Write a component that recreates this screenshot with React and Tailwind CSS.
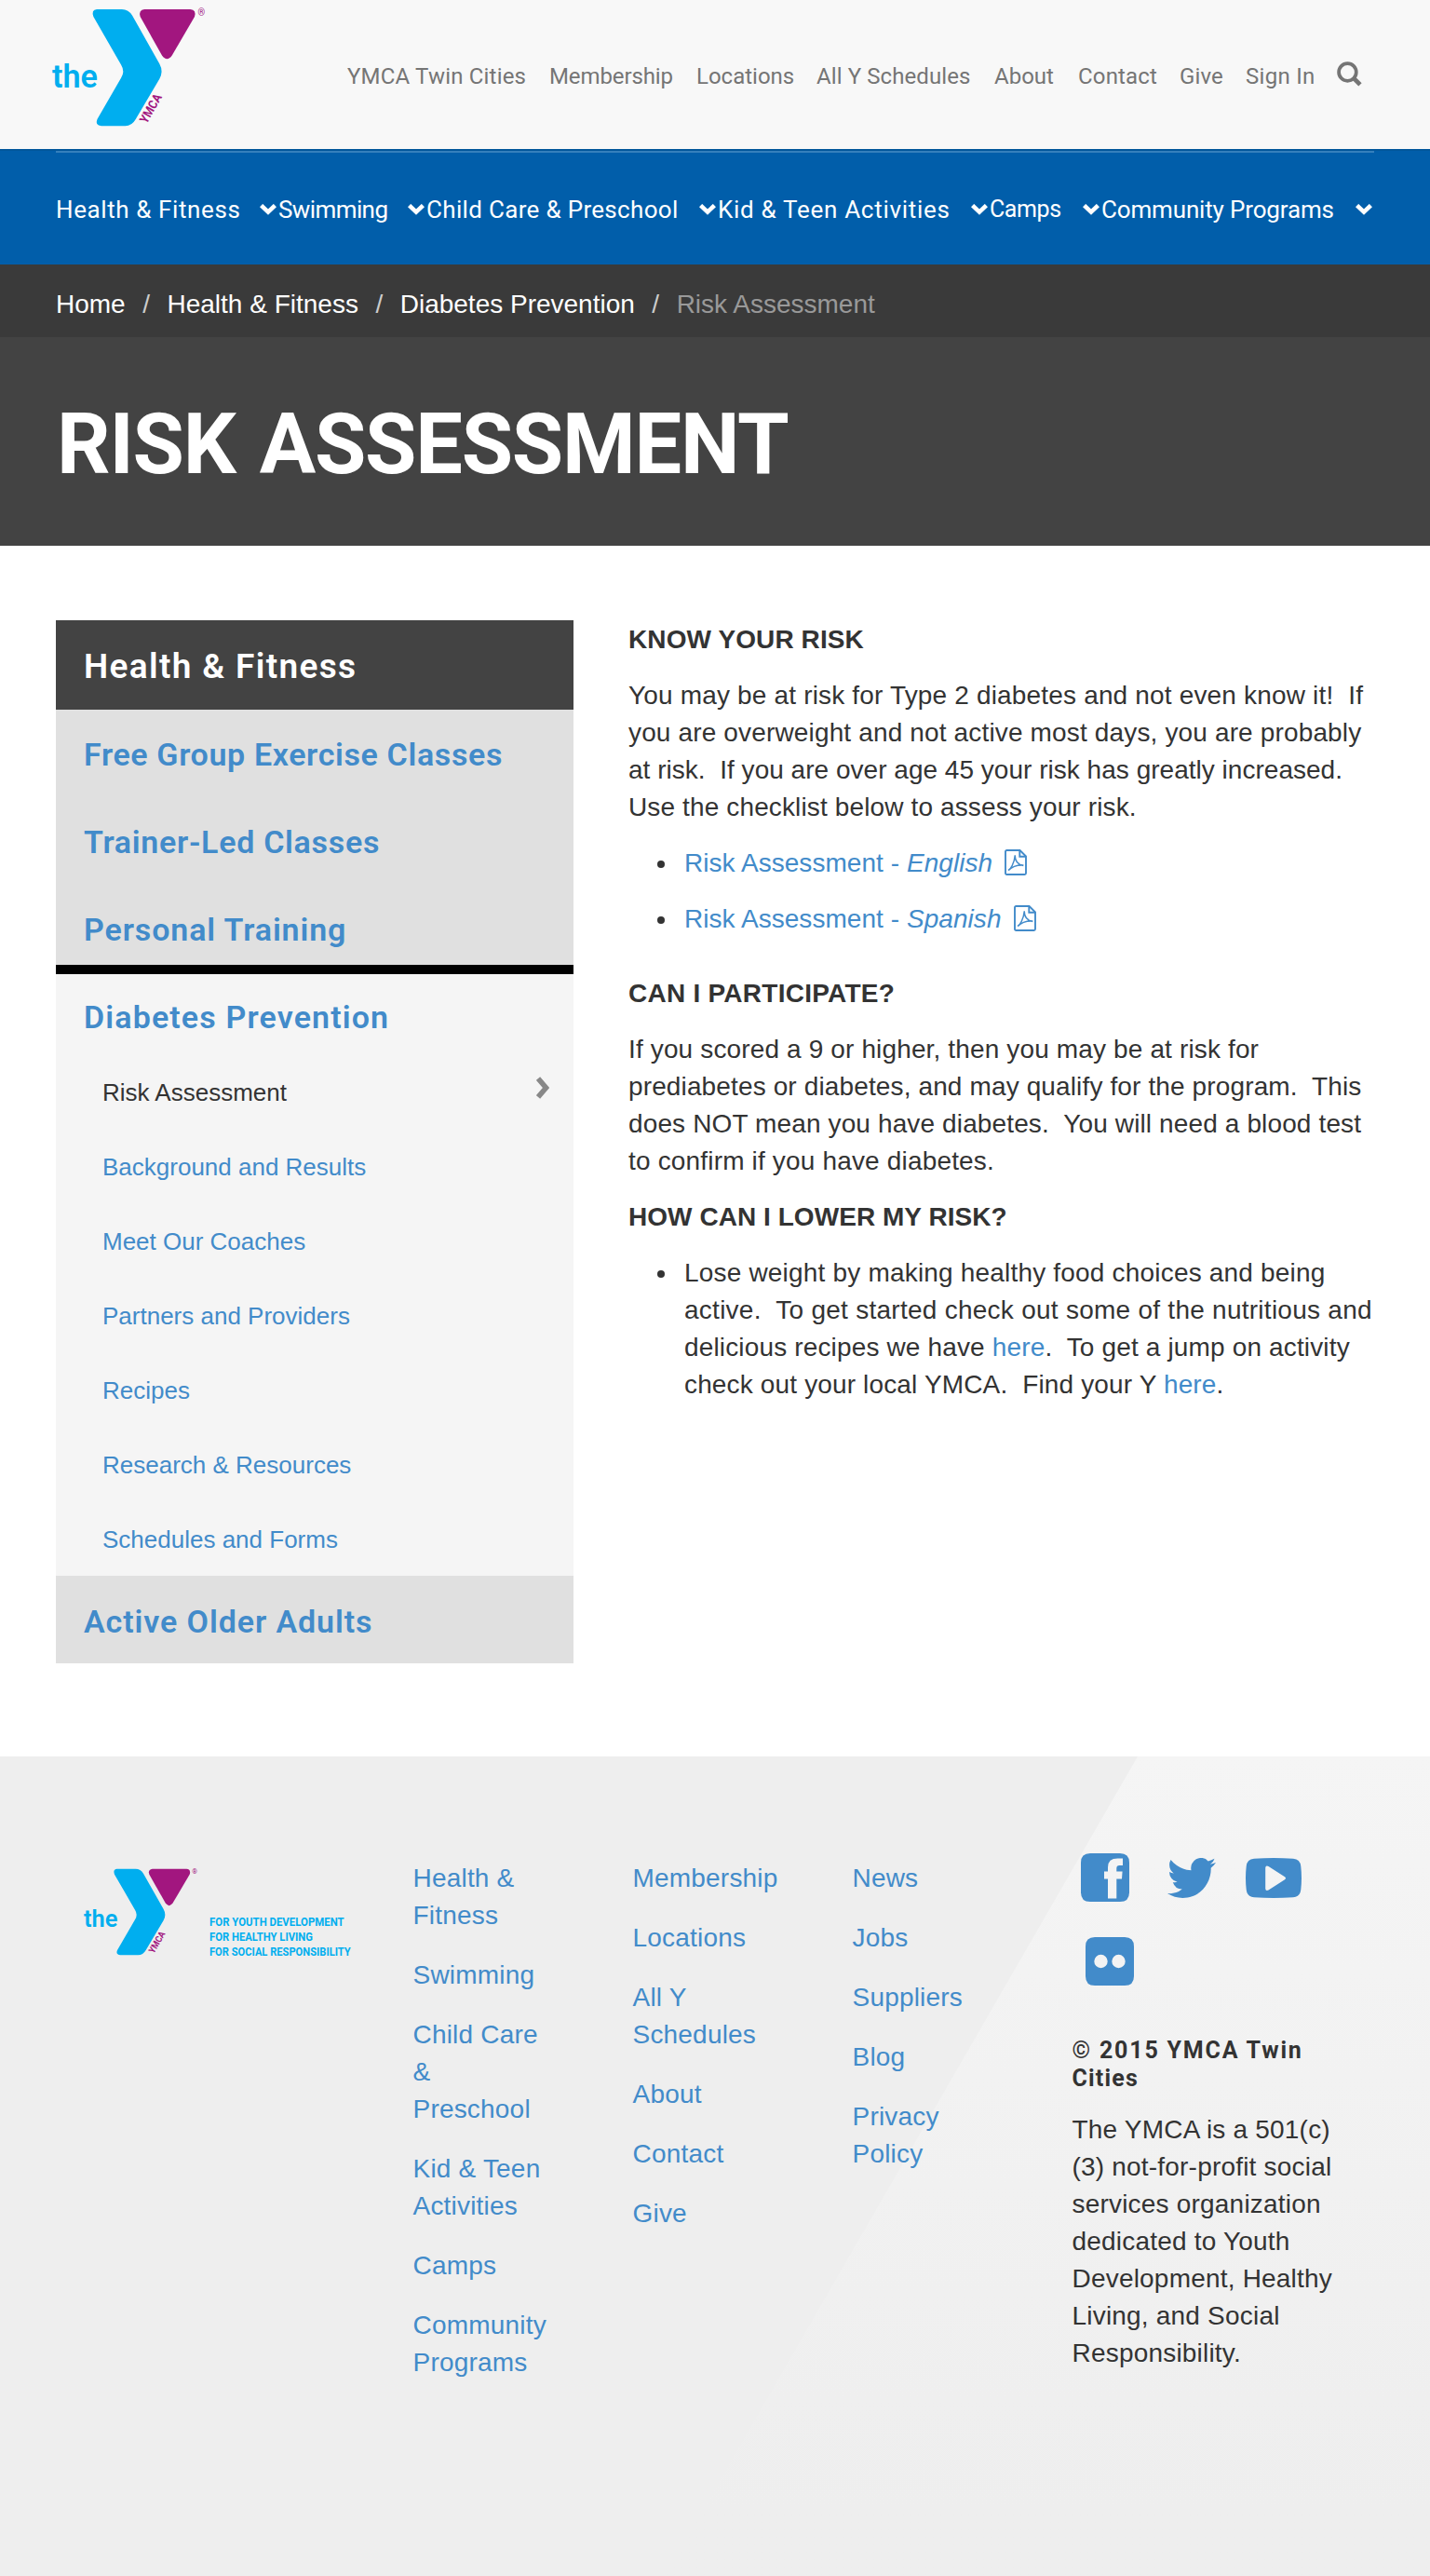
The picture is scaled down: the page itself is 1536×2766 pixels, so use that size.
import React from "react";

const SANS = "font-['Liberation_Sans',Arial,sans-serif]";
const HEAD = "font-[Roboto,sans-serif]";

function YMark({ className, tagline }) {
  return (
    <svg viewBox={tagline ? "150 138 870 284" : "150 138 370 284"} preserveAspectRatio="none" className={`overflow-visible ${className}`} fontFamily="Roboto, sans-serif" fontWeight="700">
      <text x="150" y="326" fontSize="78" fontWeight="600" textLength="109" lengthAdjust="spacingAndGlyphs" fill="#00aeef">the</text>
      <path d="M257 140H317Q333 140 342 155L407 270Q417 288 407 306L350 402Q341 418 325 418H268Q252 417 258 402L315 304Q325 288 315 272L249 158Q243 141 257 140Z" fill="#00aeef" />
      <path d="M371 140H481Q496 141 491 158L437 250Q425 267 413 250L361 158Q356 142 371 140Z" fill="#a2167f" />
      <text transform="translate(376 414) rotate(-60)" fontSize="30" textLength="75" lengthAdjust="spacingAndGlyphs" fill="#a2167f">YMCA</text>
      <text x="499" y="156" fontSize="23" fontWeight="400" textLength="17" lengthAdjust="spacingAndGlyphs" fill="#a2167f">®</text>
      {tagline && (
        <g fill="#00aeef" fontSize="38">
          <text x="555" y="323" textLength="434" lengthAdjust="spacingAndGlyphs">FOR YOUTH DEVELOPMENT</text>
          <text x="555" y="371" textLength="333" lengthAdjust="spacingAndGlyphs">FOR HEALTHY LIVING</text>
          <text x="555" y="419" textLength="455" lengthAdjust="spacingAndGlyphs">FOR SOCIAL RESPONSIBILITY</text>
        </g>
      )}
    </svg>
  );
}

const UTILITY = [
  ["YMCA Twin Cities", "w-[217px] tracking-[0.19px]"],
  ["Membership", "w-[158px] tracking-[-0.1px]"],
  ["Locations", "w-[129px]"],
  ["All Y Schedules", "w-[191px] tracking-[0.09px]"],
  ["About", "w-[90px]"],
  ["Contact", "w-[109px] tracking-[0.16px]"],
  ["Give", "w-[71px] tracking-[0.11px]"],
  ["Sign In", "w-[98px] tracking-[0.28px]"],
];

const MAIN = [
  ["Health & Fitness", "w-[239px] tracking-[0.6px]"],
  ["Swimming", "w-[159px] tracking-[-0.6px]"],
  ["Child Care & Preschool", "w-[313px] tracking-[0.32px]"],
  ["Kid & Teen Activities", "w-[292px] tracking-[0.7px]"],
  ["Camps", "w-[120px] text-[25px] tracking-[-0.4px]"],
  ["Community Programs", "w-[293px] tracking-[-0.16px]"],
];

function Header() {
  return (
    <header>
      <div className="flex h-[160px] items-start bg-[#f8f8f8] pl-14">
        <YMark className="mt-[9px] h-[128px] w-[166px] shrink-0" />
        <nav className={`${HEAD} ml-[151px] mt-[70px] flex text-2xl leading-6 whitespace-nowrap text-[#757575]`}>
          {UTILITY.map(([label, cls]) => (
            <a key={label} className={`shrink-0 ${cls}`}>{label}</a>
          ))}
          <svg viewBox="0 0 26 26" className="-mt-1 size-[27px] shrink-0" fill="none" stroke="#757575">
            <circle cx="11" cy="11" r="9" strokeWidth="3.6" />
            <path d="M17.5 17.5L24 24" strokeWidth="4.6" />
          </svg>
        </nav>
      </div>
      <div className="h-[124px] border-t-2 border-[#01569b] bg-[#015eaa] px-[60px]">
        <div className="h-0.5 bg-[#3580bc]" />
        <nav className={`${HEAD} flex pt-[45px] text-[26px] leading-8 whitespace-nowrap text-white`}>
          {MAIN.map(([label, cls]) => (
            <a key={label} className={`flex shrink-0 items-center justify-between ${cls}`}>
              {label}
              <svg viewBox="0 0 18 12" className="mr-0.5 h-3 w-[18px]" fill="none" stroke="currentColor" strokeWidth="4.6">
                <path d="M1.6 1.6L9 8.6L16.4 1.6" />
              </svg>
            </a>
          ))}
        </nav>
      </div>
    </header>
  );
}

function Breadcrumb() {
  const items = ["Home", "Health & Fitness", "Diabetes Prevention"];
  return (
    <div className={`${SANS} flex h-[78px] bg-[#3a3a3a] pl-[60px] pt-[5px] text-[28px] leading-[76px] whitespace-pre text-white`}>
      {items.map((t) => (
        <span key={t}>{t}<span className="px-[18.5px] text-[#ccc]">/</span></span>
      ))}
      <span className="text-[#999]">Risk Assessment</span>
    </div>
  );
}

const SIDE_SUB = ["Background and Results", "Meet Our Coaches", "Partners and Providers", "Recipes", "Research & Resources", "Schedules and Forms"];

function Sidebar() {
  const base = `${HEAD} flex items-center pl-[30px] text-[34px] font-semibold text-[#428bca]`;
  const item = `${base} h-[94px] pt-[3px]`;
  return (
    <aside className="w-[556px] shrink-0 bg-[#e0e0e0]">
      <div className={`${HEAD} flex h-24 items-center bg-[#434343] pl-[30px] pt-[3px] text-[37px] font-semibold tracking-[1.33px] text-white`}>Health &amp; Fitness</div>
      <div className={`${item} tracking-[0.63px]`}>Free Group Exercise Classes</div>
      <div className={`${item} tracking-[0.7px]`}>Trainer-Led Classes</div>
      <div className={`${item} -mb-2 tracking-[0.89px]`}>Personal Training</div>
      <div className="border-t-10 border-black bg-[#f5f5f5]">
        <div className={`${base} h-[86px] pt-[7px] tracking-[1.13px]`}>Diabetes Prevention</div>
        <div className={`${SANS} flex h-20 items-center justify-between pl-[50px] pr-[26px] pt-0.5 text-[26px] leading-[78px] text-[#333]`}>
          Risk Assessment
          <svg viewBox="0 0 14 24" className="-mt-2.5 h-6 w-3.5" fill="none" stroke="#888" strokeWidth="5.6">
            <path d="M2 2L10.500 12L2 22" />
          </svg>
        </div>
        {SIDE_SUB.map((t) => (
          <div key={t} className={`${SANS} h-20 pl-[50px] pt-px text-[26px] leading-[80px] text-[#428bca]`}>{t}</div>
        ))}
      </div>
      <div className={`${base} h-[94px] pt-[5px] tracking-[0.91px]`}>Active Older Adults</div>
    </aside>
  );
}

function PdfIcon() {
  return (
    <svg viewBox="0 0 24 28" className="ml-[13px] inline-block h-7 w-6 align-[-4px]" fill="none" stroke="#428bca" strokeWidth="1.9">
      <path d="M2.500 1H16.500L23 7.500V25.500Q23 27 21.500 27H2.500Q1 27 1 25.500V2.500Q1 1 2.500 1Z" />
      <path d="M16.300 1V7.700H23" />
      <path d="M4 22.400C6.500 21.500 10.500 15 11.300 6.300M11.200 6.300C11.200 12 14 16.500 20.300 17.600M4.300 22.400C8 18.600 14 16.600 20.400 17" strokeWidth="1.5" />
    </svg>
  );
}

function Bullet({ children, className = "" }) {
  return (
    <li className={`flex ${className}`}>
      <span className="ml-[31px] mt-[17px] mr-[21px] size-2 shrink-0 rounded-full bg-[#333]" />
      <div>{children}</div>
    </li>
  );
}

function Link({ children }) {
  return <a className="text-[#428bca]">{children}</a>;
}

function Content() {
  return (
    <main className={`${SANS} ml-[59px] pt-px text-[28px] leading-10 whitespace-pre text-[#333]`}>
      <p className="font-bold tracking-[0.1px]">KNOW YOUR RISK</p>
      <div className="mt-5">
        <div className="tracking-[0.17px]">{"You may be at risk for Type 2 diabetes and not even know it!  If"}</div>
        <div className="tracking-[0.15px]">you are overweight and not active most days, you are probably</div>
        <div className="tracking-[0.02px]">{"at risk.  If you are over age 45 your risk has greatly increased."}</div>
        <div className="tracking-[0.13px]">Use the checklist below to assess your risk.</div>
      </div>
      <ul className="mt-5 tracking-[0.05px]">
        <Bullet><Link>Risk Assessment - <i>English</i><PdfIcon /></Link></Bullet>
        <Bullet className="mt-5"><Link>Risk Assessment - <i>Spanish</i><PdfIcon /></Link></Bullet>
      </ul>
      <p className="mt-10 font-bold tracking-[0.25px]">CAN I PARTICIPATE?</p>
      <div className="mt-5">
        <div className="tracking-[0.14px]">If you scored a 9 or higher, then you may be at risk for</div>
        <div className="tracking-[0.13px]">{"prediabetes or diabetes, and may qualify for the program.  This"}</div>
        <div className="tracking-[0.13px]">{"does NOT mean you have diabetes.  You will need a blood test"}</div>
        <div className="tracking-[0.17px]">to confirm if you have diabetes.</div>
      </div>
      <p className="mt-5 font-bold tracking-[0.05px]">HOW CAN I LOWER MY RISK?</p>
      <ul className="mt-5">
        <Bullet>
          <div className="tracking-[0.19px]">Lose weight by making healthy food choices and being</div>
          <div className="tracking-[0.26px]">{"active.  To get started check out some of the nutritious and"}</div>
          <div className="tracking-[0.15px]">delicious recipes we have <Link>here</Link>{".  To get a jump on activity"}</div>
          <div className="tracking-[0.15px]">{"check out your local YMCA.  Find your Y "}<Link>here</Link>.</div>
        </Bullet>
      </ul>
    </main>
  );
}

const COLUMNS = [
  ["Health & Fitness", "Swimming", "Child Care & Preschool", "Kid & Teen Activities", "Camps", "Community Programs"],
  ["Membership", "Locations", "All Y Schedules", "About", "Contact", "Give"],
  ["News", "Jobs", "Suppliers", "Blog", "Privacy Policy"],
];

function Social() {
  return (
    <div className="flex h-[200px] flex-wrap content-start items-center pl-[9px] text-[#428bca]">
      <svg viewBox="0 0 52 52" className="mt-0.5 mr-[41px] h-[52px] w-[52px]" fill="currentColor">
        <path fillRule="evenodd" d="M10 0H42Q52 0 52 10V42Q52 52 42 52H10Q0 52 0 42V10Q0 0 10 0ZM29 48.500H38.300V27.500H44L44.600 19.500H38.300V16Q38.300 13 41.500 13H45V5.600H39.500Q29 5.600 29 15V19.500H25V27.500H29Z" />
      </svg>
      <svg viewBox="0 0 24 19.5" preserveAspectRatio="none" className="mt-0.5 mr-8 h-[43px] w-[52px]" fill="currentColor">
        <path d="M23.953 2.31c-.885.389-1.83.654-2.825.775 1.014-.611 1.794-1.574 2.163-2.723-.951.555-2.005.959-3.127 1.184a4.92 4.92 0 00-8.384 4.482C7.69 5.835 4.067 3.867 1.64.892a4.822 4.822 0 00-.666 2.475c0 1.71.87 3.213 2.188 4.096a4.904 4.904 0 01-2.228-.616v.06a4.923 4.923 0 003.946 4.827 4.996 4.996 0 01-2.212.085 4.936 4.936 0 004.604 3.417 9.867 9.867 0 01-6.102 2.105c-.39 0-.779-.023-1.17-.067a13.995 13.995 0 007.557 2.209c9.053 0 13.998-7.496 13.998-13.985 0-.21 0-.42-.015-.63A9.935 9.935 0 0024 2.309z" />
      </svg>
      <svg viewBox="0 0 60 43" className="mt-0.5 h-[43px] w-[60px]" fill="currentColor">
        <path fillRule="evenodd" d="M9 .8Q30-.8 51 .8Q58.500 1.300 59.300 9Q60.700 21.500 59.300 34Q58.500 41.700 51 42.200Q30 43.800 9 42.200Q1.500 41.700.7 34Q-.7 21.500.7 9Q1.500 1.300 9 .8ZM21.200 10.500V33Q21.500 36 24.500 34.600L42 23.200Q44 21.700 42 20.200L24.500 8.900Q21.500 7.600 21.200 10.500Z" />
      </svg>
      <div className="w-full" />
      <svg viewBox="0 0 52 52" className="mt-[38px] ml-[5px] size-[52px]" fill="currentColor">
        <path fillRule="evenodd" d="M10 0H42Q52 0 52 10V42Q52 52 42 52H10Q0 52 0 42V10Q0 0 10 0ZM9.300 26A7.200 7.200 0 1 0 23.700 26A7.200 7.200 0 1 0 9.300 26ZM28.300 26A7.200 7.200 0 1 0 42.700 26A7.200 7.200 0 1 0 28.300 26Z" />
      </svg>
    </div>
  );
}

function Footer() {
  return (
    <footer className={`${SANS} relative h-[880px] bg-[#eee] text-[28px] leading-10`}>
      <div className="absolute inset-0 bg-linear-to-b from-[#f5f5f5] to-[#eee] to-[92%] [clip-path:polygon(1222px_0,100%_0,100%_100%,714px_100%)]" />
      <div className="relative flex">
        <div className="w-[443.500px] shrink-0 pl-[90px] pt-[120px]">
          <YMark tagline className="h-[94.660px] w-[290px]" />
        </div>
        {COLUMNS.map((col, i) => (
          <ul key={i} className="mr-[90px] flex w-[146px] shrink-0 flex-col gap-6 pt-[111px] tracking-[0.2px] text-[#428bca]">
            {col.map((t) => <li key={t}>{t}</li>)}
          </ul>
        ))}
        <div className="w-[290px] pt-[102px] text-[#333]">
          <Social />
          <div className={`${HEAD} -mt-px text-[25px] leading-[30px] font-bold`}>
            <div className="tracking-[1.800px] whitespace-nowrap">© 2015 YMCA Twin</div>
            <div className="tracking-[1.200px]">Cities</div>
          </div>
          <p className="mt-[20px] tracking-[0.2px]">The YMCA is a 501(c)<wbr />(3) not-for-profit social services organization dedicated to Youth Development, Healthy Living, and Social Responsibility.</p>
        </div>
      </div>
    </footer>
  );
}

export default function App() {
  return (
    <div className="w-[1536px] bg-white">
      <Header />
      <Breadcrumb />
      <div className={`${HEAD} h-56 bg-[#434343] pl-[61px] pt-[71px] text-[90px] leading-[90px] font-bold tracking-[-1.250px] [word-spacing:5px] text-white`}>RISK ASSESSMENT</div>
      <div className="flex items-start px-[60px] pt-20 pb-[100px]">
        <Sidebar />
        <Content />
      </div>
      <Footer />
    </div>
  );
}
